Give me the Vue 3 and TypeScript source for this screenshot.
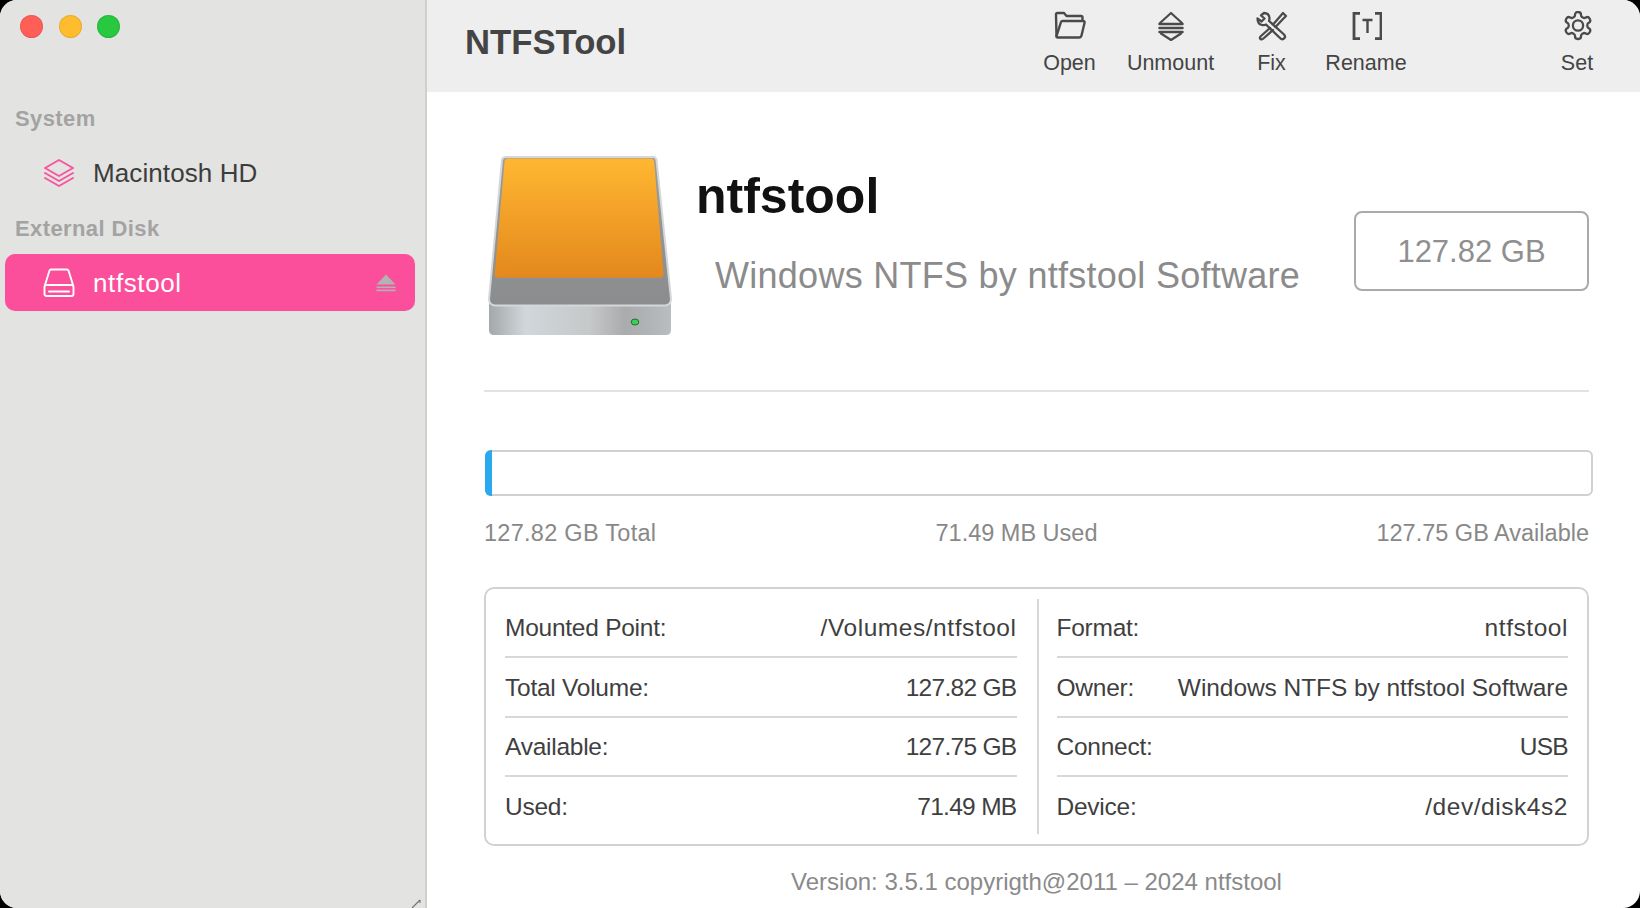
<script setup lang="ts">
interface Row {
  label: string
  value: string
  fit?: string
}
const leftRows: Row[] = [
  { label: 'Mounted Point:', value: '/Volumes/ntfstool', fit: 'wide' },
  { label: 'Total Volume:', value: '127.82 GB', fit: 'tight' },
  { label: 'Available:', value: '127.75 GB', fit: 'tight' },
  { label: 'Used:', value: '71.49 MB', fit: 'tight' },
]
const rightRows: Row[] = [
  { label: 'Format:', value: 'ntfstool', fit: 'wide' },
  { label: 'Owner:', value: 'Windows NTFS by ntfstool Software', fit: 'snug' },
  { label: 'Connect:', value: 'USB', fit: 'tight' },
  { label: 'Device:', value: '/dev/disk4s2', fit: 'wide' },
]
</script>

<template>
  <div class="window">
    <aside class="sidebar">
      <div class="lights">
        <span class="light red"></span>
        <span class="light yellow"></span>
        <span class="light green"></span>
      </div>
      <div class="group system-group">System</div>
      <div class="disk">
        <svg class="disk-icon layers" viewBox="0 0 32 30" fill="none" stroke="#f7559f" stroke-width="2" stroke-linejoin="round" stroke-linecap="round">
          <path d="M16 2 L30 10 L16 18 L2 10 Z" />
          <path d="M2 15 L16 23 L30 15" />
          <path d="M2 20 L16 28 L30 20" />
        </svg>
        <span>Macintosh HD</span>
      </div>
      <div class="group external-group">External Disk</div>
      <div class="disk selected">
        <svg class="disk-icon" viewBox="0 0 32 30" fill="none" stroke="#fff" stroke-width="1.9" stroke-linejoin="round" stroke-linecap="round">
          <path d="M2 17 L6.5 2.5 Q7 1.5 8 1.5 L24 1.5 Q25 1.5 25.5 2.5 L30 17" />
          <rect x="1.5" y="17" width="29" height="11" rx="2" />
          <path d="M6 23.5 L26 23.5" />
        </svg>
        <span class="selected-name">ntfstool</span>
        <svg class="eject" viewBox="0 0 20 18" fill="#b3b3b3">
          <path d="M10 0.5 L19.5 10.5 L0.5 10.5 Z" />
          <rect x="0.5" y="12.5" width="19" height="1.6" />
          <rect x="0.5" y="15.6" width="19" height="1.6" />
        </svg>
      </div>
      <svg class="resize" viewBox="0 0 12 10" fill="none" stroke="#777" stroke-width="1.2">
        <path d="M1 9 L9 1" />
        <path d="M9 1 L9 4" />
      </svg>
    </aside>

    <main class="main">
      <header class="toolbar">
        <h1 class="app-title">NTFSTool</h1>
        <div class="tool">
          <svg viewBox="0 0 32 30" fill="none" stroke="#4a4a4a" stroke-width="2.4" stroke-linejoin="round">
            <path d="M2.500 25 L2 3.500 Q2 2 3.500 2 L10 2 L12.500 5 L27 5 Q28.500 5 28.500 6.500 L28.500 10" />
            <path d="M7 11 Q7.300 10 8.500 10 L29 10 Q31 10 30.500 12 L27.500 24.500 Q27 26.500 25 26.500 L4 26.500 Q2 26.500 2.500 25 Z" />
          </svg>
          <span>Open</span>
        </div>
        <div class="tool">
          <svg viewBox="0 0 32 30" fill="none" stroke="#4a4a4a" stroke-width="2.2" stroke-linejoin="round" stroke-linecap="round">
            <path d="M5 12 L16 2 L27 12" />
            <path d="M6 22.500 L16 29 L26 22.500" />
            <path d="M4.500 13 L27.500 13 M4.500 17 L27.500 17 M4.500 21 L27.500 21" stroke-width="2.500" />
          </svg>
          <span>Unmount</span>
        </div>
        <div class="tool">
          <svg viewBox="0 0 32 30" fill="none" stroke="#4a4a4a" stroke-width="2.300" stroke-linejoin="round" stroke-linecap="round">
            <path d="M8 2 Q13 2 13.500 7 Q13.500 9 13 10 L27.500 23 Q30 25.500 28.500 27 Q26.500 29.500 24 27 L10 13.500 Q8 14.500 6 14 Q1.500 13 1.500 7.500 L5.500 10.500 L8.500 7.500 L5 4.500 Z" />
            <path d="M17.500 13 L24 5.500 L27 2 L30 5 L27 8 L19.500 16" />
            <path d="M14 17 L5 25 Q3 27 4.500 28 Q6 29 8 27 L17 19" />
          </svg>
          <span>Fix</span>
        </div>
        <div class="tool">
          <svg viewBox="0 0 32 30" fill="none" stroke="#4a4a4a" stroke-width="2.800">
            <path d="M10 2.300 L4 2.300 L4 27.700 L10 27.700" />
            <path d="M25 2.300 L31 2.300 L31 27.700 L25 27.700" />
            <path d="M12.500 9 L22.500 9 M17.500 9 L17.500 22" stroke-width="2.400" />
          </svg>
          <span>Rename</span>
        </div>
        <div class="tool set">
          <svg viewBox="-0.6 1.26 23.7 22.2" fill="none" stroke="#4a4a4a" stroke-width="1.700" stroke-linejoin="round" stroke-linecap="round">
            <path d="M12.220 2h-.44a2 2 0 0 0-2 2v.18a2 2 0 0 1-1 1.730l-.43.25a2 2 0 0 1-2 0l-.15-.08a2 2 0 0 0-2.730.73l-.22.38a2 2 0 0 0 .73 2.730l.15.1a2 2 0 0 1 1 1.720v.51a2 2 0 0 1-1 1.740l-.15.09a2 2 0 0 0-.73 2.730l.22.38a2 2 0 0 0 2.730.73l.15-.08a2 2 0 0 1 2 0l.43.25a2 2 0 0 1 1 1.730V20a2 2 0 0 0 2 2h.44a2 2 0 0 0 2-2v-.18a2 2 0 0 1 1-1.730l.43-.25a2 2 0 0 1 2 0l.15.08a2 2 0 0 0 2.730-.73l.22-.39a2 2 0 0 0-.73-2.730l-.15-.08a2 2 0 0 1-1-1.740v-.5a2 2 0 0 1 1-1.740l.15-.09a2 2 0 0 0 .73-2.730l-.22-.38a2 2 0 0 0-2.730-.73l-.15.08a2 2 0 0 1-2 0l-.43-.25a2 2 0 0 1-1-1.730V4a2 2 0 0 0-2-2z" />
            <circle cx="12" cy="12" r="3.800" />
          </svg>
          <span>Set</span>
        </div>
      </header>

      <section class="content">
        <div class="hero">
          <svg class="drive" viewBox="0 0 184 180">
            <defs>
              <linearGradient id="orange" x1="0" y1="0" x2="0" y2="1">
                <stop offset="0" stop-color="#ffb731" />
                <stop offset="1" stop-color="#e3881d" />
              </linearGradient>
              <linearGradient id="silver" x1="0" y1="0" x2="1" y2="0">
                <stop offset="0" stop-color="#a3a8aa" />
                <stop offset="0.2" stop-color="#d0d7da" />
                <stop offset="0.55" stop-color="#c6c8c9" />
                <stop offset="0.75" stop-color="#a9abac" />
                <stop offset="1" stop-color="#b9bdbf" />
              </linearGradient>
              <linearGradient id="grey" x1="0" y1="0" x2="0" y2="1">
                <stop offset="0" stop-color="#9c9c9d" />
                <stop offset="1" stop-color="#8b8c8d" />
              </linearGradient>
            </defs>
            <path d="M1 146 L1 174 Q1 179 6 179 L178 179 Q183 179 183 174 L183 146 Z" fill="url(#silver)" />
            <path d="M14 4 Q14.500 1 18 1 L165 1 Q168 1 168.500 4 L183 143 Q183 149 177 149.500 L7 149.500 Q1 149 1 143 Z" fill="url(#grey)" stroke="#d4d8da" stroke-width="2" />
            <path d="M16.500 6 Q17 2.500 20 2.500 L163 2.500 Q165.800 2.500 166.200 6 L175.500 118 Q175.500 121.700 172 121.700 L10 121.700 Q6.500 121.700 6.700 118 Z" fill="url(#orange)" />
            <ellipse cx="147" cy="166" rx="3.800" ry="3" fill="#3ad052" stroke="#2b6b38" stroke-width="1" />
          </svg>
          <div class="hero-text">
            <h2 class="volume">ntfstool</h2>
            <p class="vendor">Windows NTFS by ntfstool Software</p>
          </div>
          <div class="capacity"><span class="capacity-text">127.82 GB</span></div>
        </div>

        <div class="bar"><div class="bar-fill"></div></div>
        <div class="legend">
          <span class="legend-total">127.82 GB Total</span>
          <span class="legend-mid">71.49 MB Used</span>
          <span>127.75 GB Available</span>
        </div>

        <div class="details">
          <div class="column">
            <div v-for="row in leftRows" :key="row.label" class="row">
              <span class="label">{{ row.label }}</span><span :class="row.fit">{{ row.value }}</span>
            </div>
          </div>
          <div class="sep"></div>
          <div class="column">
            <div v-for="row in rightRows" :key="row.label" class="row">
              <span class="label">{{ row.label }}</span><span :class="row.fit">{{ row.value }}</span>
            </div>
          </div>
        </div>

        <p class="version">Version: 3.5.1 copyrigth@2011 – 2024 ntfstool</p>
      </section>
    </main>
  </div>
</template>

<style>
html, body { background: #000; margin: 0; overflow: hidden; }
</style>

<style scoped>
.window {
  width: 1640px;
  height: 908px;
  display: flex;
  overflow: hidden;
  border-radius: 17px;
  background: #fff;
  font-family: "Liberation Sans", Arial, sans-serif;
  color: #3a3a3a;
}
.sidebar {
  position: relative;
  box-sizing: border-box;
  width: 427px;
  flex: none;
  background: #e3e3e1;
  border-right: 2px solid #d0d0d0;
  padding: 15px 10px 0 5px;
}
.lights { display: flex; gap: 15.500px; padding-left: 15px; }
.light {
  width: 23px;
  height: 23px;
  border-radius: 50%;
  box-sizing: border-box;
  border: 1px solid rgba(0, 0, 0, 0.08);
}
.red { background: #ff5f57; }
.yellow { background: #febc2e; }
.green { background: #28c840; }
.group {
  font-size: 22px;
  font-weight: 700;
  color: #a3a3a3;
  line-height: 26px;
  padding-left: 10px;
  letter-spacing: 0.4px;
}
.system-group { margin-top: 68px; }
.external-group { margin-top: 14px; }
.disk {
  display: flex;
  align-items: center;
  height: 57px;
  padding-left: 38px;
  font-size: 26px;
  letter-spacing: 0.1px;
  color: #3d3d3d;
  margin-top: 13px;
  box-sizing: border-box;
}
.disk-icon { width: 32px; height: 30px; flex: none; margin-right: 18px; }
.layers { margin-top: -2px; }
.selected {
  margin-top: 12px;
  background: #fb4f9c;
  border-radius: 10px;
  color: #fff;
  letter-spacing: 0.6px;
}
.selected-name { padding-top: 2px; }
.eject { width: 20px; height: 18px; margin-left: auto; margin-right: 19px; }
.resize { position: absolute; right: 2px; bottom: -1px; width: 12px; height: 10px; }

.main { flex: 1; min-width: 0; display: flex; flex-direction: column; }
.toolbar {
  height: 92px;
  background: #eeeeee;
  display: grid;
  grid-template-columns: 1fr 101px 101px 101px 88px 130px 74px;
  padding-right: 26px;
  flex: none;
}
.app-title {
  margin: 0;
  padding: 24px 0 0 38px;
  font-size: 34.700px;
  line-height: 36px;
  font-weight: 700;
  color: #444;
}
.tool {
  display: flex;
  flex-direction: column;
  align-items: center;
  font-size: 21.500px;
  color: #444;
  padding-top: 11px;
  line-height: 26px;
}
.tool svg { width: 32px; height: 30px; margin-bottom: 9px; }
.set { grid-column: 7; }

.content { flex: 1; padding: 0 51px 0 57px; display: flex; flex-direction: column; }
.hero {
  display: flex;
  height: 300px;
  border-bottom: 2px solid #e2e2e2;
  box-sizing: border-box;
}
.drive { width: 184px; height: 180px; margin: 64px 0 0 4px; flex: none; }
.hero-text { margin-left: 24px; }
.volume {
  margin: 73px 0 0;
  font-size: 50px;
  line-height: 62px;
  font-weight: 700;
  color: #111;
}
.vendor {
  margin: 28px 0 0 19px;
  font-size: 36px;
  line-height: 42px;
  color: #8b8b8b;
  letter-spacing: 0.27px;
}
.capacity {
  margin: 119px 0 0 auto;
  width: 235px;
  height: 80px;
  box-sizing: border-box;
  border: 2px solid #aaa;
  border-radius: 8px;
  display: flex;
  align-items: center;
  justify-content: center;
  font-size: 31px;
  color: #8f8f8f;
}
.capacity-text { padding-top: 2px; }
.bar {
  margin: 58px -4px 0 1px;
  height: 46px;
  box-sizing: border-box;
  border: 2px solid #d0d0d0;
  border-radius: 6px;
  flex: none;
}
.bar-fill {
  width: 7px;
  height: calc(100% + 4px);
  margin: -2px 0 0 -2px;
  background: #29aaef;
  border-radius: 6px 0 0 6px;
}
.legend {
  display: grid;
  grid-template-columns: 1fr auto 1fr;
  margin-top: 24px;
  font-size: 23.500px;
  line-height: 27px;
  color: #888;
}
.legend span:last-child { text-align: right; }
.legend-total { letter-spacing: 0.28px; }
.legend-mid { transform: translateX(-20px); }
.details {
  margin-top: 40px;
  height: 259px;
  box-sizing: border-box;
  border: 2px solid #d2d2d2;
  border-radius: 10px;
  display: flex;
  padding: 10px 19px 8px;
  flex: none;
}
.column { flex: 1; min-width: 0; display: grid; grid-auto-rows: 1fr; }
.sep { width: 2px; background: #d8d8d8; margin: 0 18px 2px 20px; flex: none; }
.row {
  box-sizing: border-box;
  display: flex;
  justify-content: space-between;
  align-items: center;
  font-size: 24.500px;
  color: #3f3f3f;
  border-bottom: 2px solid #d8d8d8;
  padding-top: 1px;
}
.row + .row { padding-top: 2px; }
.row:last-child { border-bottom: none; padding-top: 1px; }
.label { letter-spacing: -0.25px; }
.wide { letter-spacing: 0.55px; }
.tight { letter-spacing: -0.7px; }
.snug { letter-spacing: -0.06px; }
.version {
  margin: 22px 0 0;
  text-align: center;
  font-size: 24px;
  line-height: 27px;
  color: #8a8a8a;
}
</style>
